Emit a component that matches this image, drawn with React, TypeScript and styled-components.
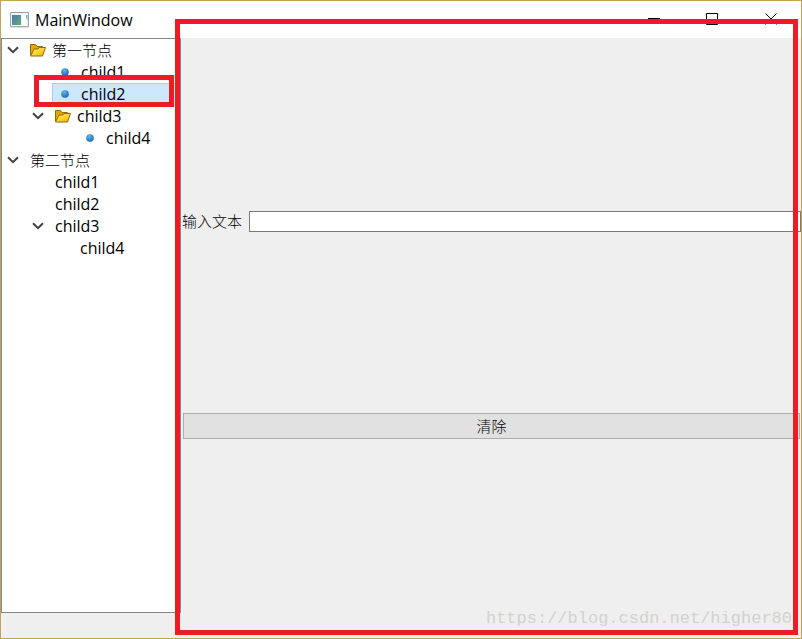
import React, { useState } from "react";
import styled, { createGlobalStyle } from "styled-components";

const latin = `"Open Sans", "Noto Sans CJK SC", sans-serif`;
const han = `"Noto Sans CJK SC", sans-serif`;

const GlobalStyle = createGlobalStyle`
  *, *::before, *::after { box-sizing: border-box; }
  body { margin: 0; background: #efefef; }
`;

const Window = styled.div`
  position: relative;
  display: flex;
  flex-direction: column;
  min-height: 100vh;
  overflow: hidden;
  border: 1px solid #c2a35c;
  background: #efefef;
  color: #000;
  font: 16px/22px ${latin};
`;

const TitleBar = styled.header`
  display: flex;
  align-items: center;
  height: 37px;
  padding-left: 9px;
  background: #fff;
`;

const Title = styled.h1`
  flex: 1;
  margin: 0 0 0 5px;
  font-size: 16px;
  line-height: 20px;
  font-weight: 400;
`;

const CaptionButton = styled.button`
  display: grid;
  place-items: center;
  width: 59px;
  height: 37px;
  padding: 0;
  border: 0;
  background: transparent;
`;

const Body = styled.main`
  flex: 1;
  display: flex;
`;

const TreePane = styled.nav`
  flex: 0 0 180px;
  border: 1px solid #828790;
  background: #fff;
`;

const TreeList = styled.ul`
  margin: 0;
  padding: 0;
  list-style: none;
`;

const TreeRow = styled.li<{ $depth: number }>`
  display: flex;
  align-items: center;
  height: 22px;
  padding-left: ${({ $depth }) => $depth * 25}px;
`;

const Toggle = styled.button`
  display: grid;
  place-items: center;
  width: 25px;
  height: 22px;
  padding: 0 3px 0 0;
  border: 0;
  background: transparent;
`;

const Indent = styled.span`
  width: 25px;
`;

const Item = styled.button<{ $selected: boolean; $han: boolean }>`
  flex: 1;
  display: flex;
  align-items: center;
  gap: 4px;
  height: 22px;
  padding: 0 0 0 2px;
  border: 1px solid ${({ $selected }) => ($selected ? "#99d1ff" : "transparent")};
  background: ${({ $selected }) => ($selected ? "#cce8ff" : "transparent")};
  color: inherit;
  font: ${({ $han }) => ($han ? `300 15px/20px ${han}` : `16px/20px ${latin}`)};
  text-align: left;
  white-space: nowrap;
`;

const IconSlot = styled.span`
  display: grid;
  place-items: center start;
  width: 18px;
  height: 18px;
`;

const DotSlot = styled.span`
  display: grid;
  place-items: center;
  width: 22px;
  height: 18px;
  padding-right: 2px;
`;

const Content = styled.form`
  flex: 1;
  display: flex;
  flex-direction: column;
  justify-content: center;
  gap: 181px;
  min-width: 0;
  padding-bottom: 2px;
  font: 300 15px/20px ${han};
`;

const Field = styled.div`
  display: flex;
  align-items: flex-start;
  gap: 7px;
  padding-left: 1px;
`;

const TextInput = styled.input`
  flex: 1;
  min-width: 0;
  height: 21px;
  padding: 0 4px;
  border: 1px solid #7a7a7a;
  border-radius: 0;
  background: #fff;
  font: 300 15px/19px ${han};
`;

const ClearButton = styled.button`
  height: 26px;
  margin: 0 1px 0 2px;
  border: 1px solid #adadad;
  background: #e1e1e1;
  color: #000;
  font: 300 15px/20px ${han};
`;

const StatusBar = styled.footer`
  height: 25px;
`;

const Watermark = styled.span`
  position: absolute;
  right: 9px;
  bottom: 8px;
  color: #d2d2ce;
  font: 17px/22px "Liberation Mono", monospace;
`;

const Frame = styled.div`
  position: absolute;
  border: 5px solid #ed1c24;
  pointer-events: none;
`;

const PaneFrame = styled(Frame)`
  inset: 18px 3px 3px 174px;
`;

const ItemFrame = styled(Frame)`
  top: 74px;
  left: 33px;
  width: 140px;
  height: 32px;
`;

const AppIcon = () => (
  <svg width="20" height="16" viewBox="0 0 20 16" aria-hidden="true">
    <defs>
      <linearGradient id="app" x1="0" y1="0" x2="1" y2="1">
        <stop offset="0" stopColor="#4a76ad" />
        <stop offset="1" stopColor="#5fae7b" />
      </linearGradient>
    </defs>
    <path d="M.5.5h18v14H.5z" fill="#f3f5f6" stroke="#9ba1a6" />
    <path d="M2 3h9v10H2z" fill="url(#app)" />
    <path d="M12 3h4v10h-4z" fill="#fff" />
    <path d="M16 3h1.5v5L16 6z" fill="#73b8a1" />
    <path d="M0 15h19" stroke="#b7bbbe" />
  </svg>
);

const Chevron = () => (
  <svg width="12" height="8" viewBox="0 0 12 8" aria-hidden="true">
    <path d="M1 1.3 6 6.2l5-4.9" fill="none" stroke="#404040" strokeWidth="2" />
  </svg>
);

const Folder = () => (
  <svg width="17" height="16" viewBox="1 0 17 16" aria-hidden="true">
    <defs>
      <linearGradient id="folder" x1="0" y1="0" x2="1" y2="1">
        <stop offset="0" stopColor="#fff09a" />
        <stop offset=".5" stopColor="#ffd52e" />
        <stop offset="1" stopColor="#f0ac00" />
      </linearGradient>
    </defs>
    <path d="M1.5 13V2.5h5L8 4.5h5.5v3" fill="#e3a900" stroke="#96690b" />
    <path d="M1.5 14 5 7h4l1-1.5h6.5L13.5 14z" fill="url(#folder)" stroke="#96690b" />
  </svg>
);

const Dot = () => (
  <svg width="8" height="8" viewBox="0 0 8 8" aria-hidden="true">
    <defs>
      <radialGradient id="dot" cx=".4" cy=".3" r=".7">
        <stop offset="0" stopColor="#65b5eb" />
        <stop offset="1" stopColor="#1669b1" />
      </radialGradient>
    </defs>
    <circle cx="4" cy="4" r="3.8" fill="url(#dot)" />
  </svg>
);

type Node = {
  id: string;
  label: string;
  depth: number;
  expandable?: boolean;
  icon?: "folder" | "dot";
};

const nodes: Node[] = [
  { id: "a", label: "第一节点", depth: 0, expandable: true, icon: "folder" },
  { id: "a1", label: "child1", depth: 1, icon: "dot" },
  { id: "a2", label: "child2", depth: 1, icon: "dot" },
  { id: "a3", label: "child3", depth: 1, expandable: true, icon: "folder" },
  { id: "a4", label: "child4", depth: 2, icon: "dot" },
  { id: "b", label: "第二节点", depth: 0, expandable: true },
  { id: "b1", label: "child1", depth: 1 },
  { id: "b2", label: "child2", depth: 1 },
  { id: "b3", label: "child3", depth: 1, expandable: true },
  { id: "b4", label: "child4", depth: 2 },
];

export default function App() {
  const [selected, setSelected] = useState("a2");
  const [text, setText] = useState("");

  return (
    <>
      <GlobalStyle />
      <Window>
        <TitleBar>
          <AppIcon />
          <Title>MainWindow</Title>
          <CaptionButton aria-label="Minimize">
            <svg width="13" height="13" viewBox="0 0 13 13"><path d="M1 5.5h12" stroke="#000" /></svg>
          </CaptionButton>
          <CaptionButton aria-label="Maximize">
            <svg width="13" height="13" viewBox="0 0 13 13"><path d="M.5.5h11v11H.5z" fill="none" stroke="#000" /></svg>
          </CaptionButton>
          <CaptionButton aria-label="Close">
            <svg width="13" height="13" viewBox="0 0 13 13"><path d="m.5.5 11 11m0-11-11 11" stroke="#000" /></svg>
          </CaptionButton>
        </TitleBar>
        <Body>
          <TreePane>
            <TreeList>
              {nodes.map((n) => (
                <TreeRow key={n.id} $depth={n.depth}>
                  {n.expandable ? (
                    <Toggle type="button" aria-label={`Collapse ${n.label}`}><Chevron /></Toggle>
                  ) : (
                    <Indent />
                  )}
                  <Item
                    type="button"
                    $selected={selected === n.id}
                    $han={n.depth === 0}
                    onClick={() => setSelected(n.id)}
                  >
                    {n.icon === "folder" && <IconSlot><Folder /></IconSlot>}
                    {n.icon === "dot" && <DotSlot><Dot /></DotSlot>}
                    {n.label}
                  </Item>
                </TreeRow>
              ))}
            </TreeList>
          </TreePane>
          <Content onSubmit={(e) => e.preventDefault()}>
            <Field>
              <label htmlFor="entry">输入文本</label>
              <TextInput id="entry" value={text} onChange={(e) => setText(e.target.value)} />
            </Field>
            <ClearButton type="button" onClick={() => setText("")}>清除</ClearButton>
          </Content>
        </Body>
        <StatusBar />
        <Watermark>https://blog.csdn.net/higher80</Watermark>
        <PaneFrame />
        <ItemFrame />
      </Window>
    </>
  );
}
